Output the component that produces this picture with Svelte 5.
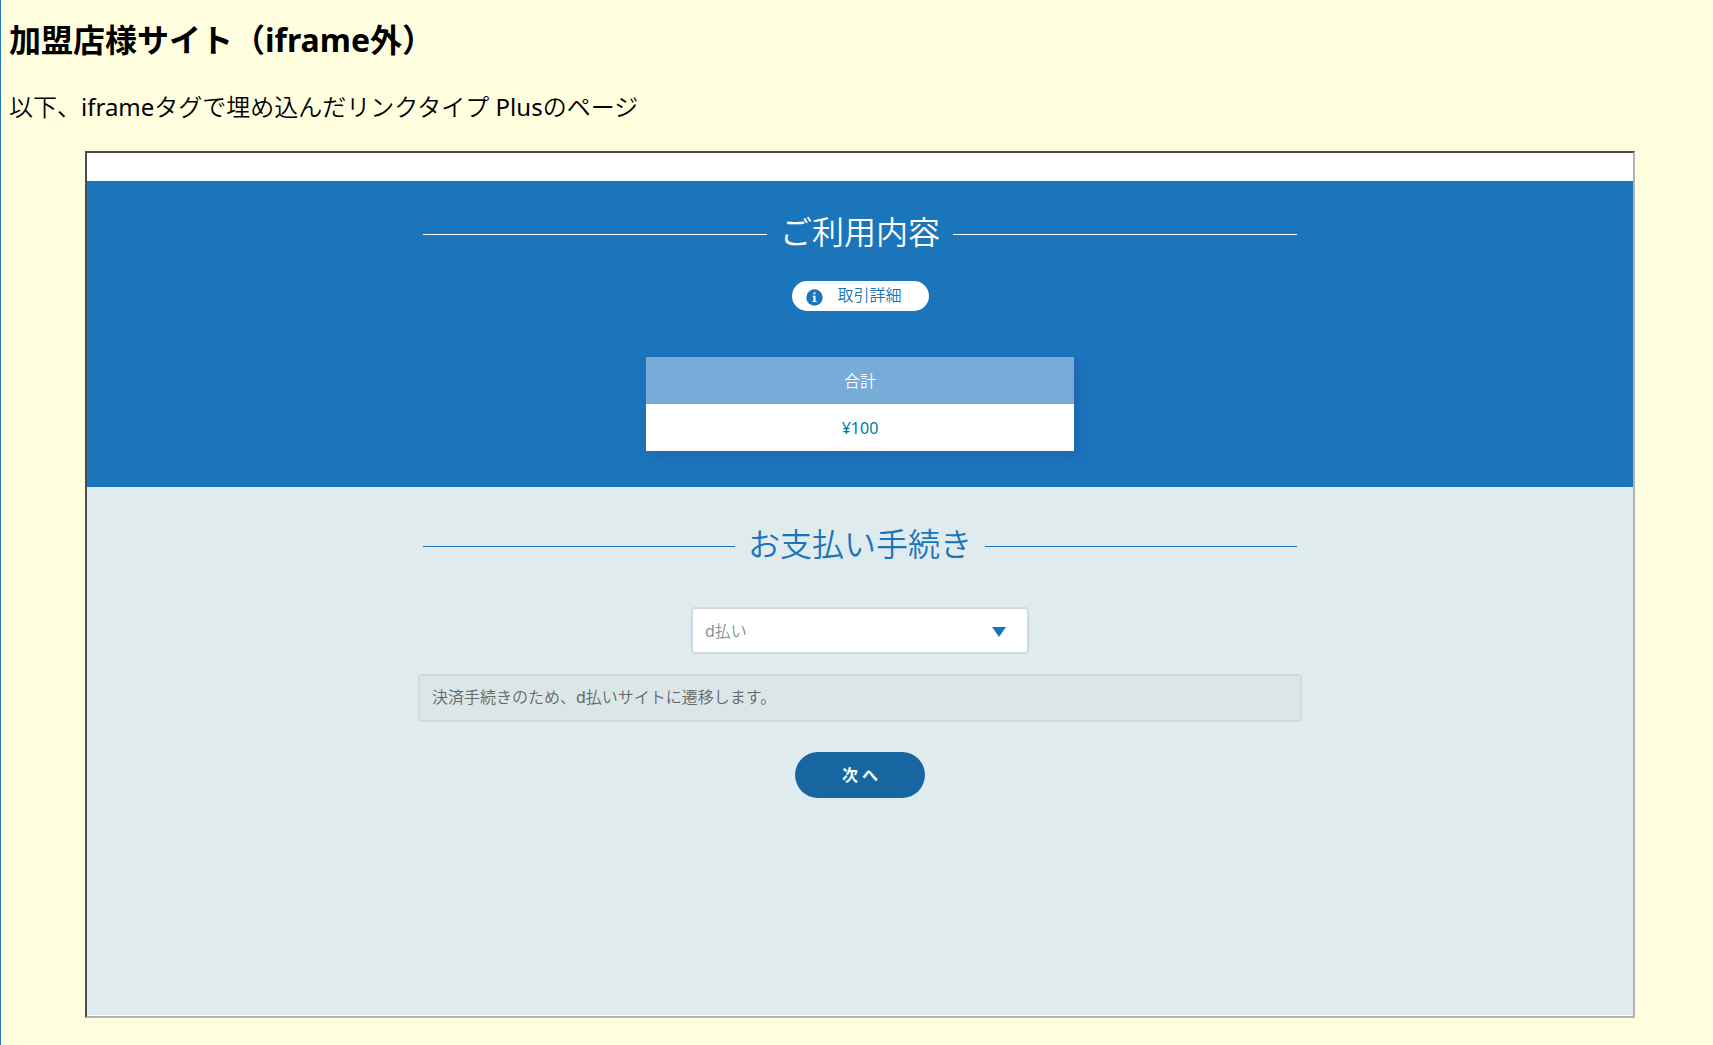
<script lang="ts">
	let methods = ['d払い']
	let selected = 'd払い'
	let amount = 100

	function formatYen(value: number): string {
		return '¥' + value.toLocaleString('ja-JP')
	}
</script>

<main>
	<h1>加盟店様サイト（iframe外）</h1>
	<p class="lead">以下、iframeタグで埋め込んだリンクタイプ Plusのページ</p>

	<div class="frame">
		<section class="usage">
			<h2>ご利用内容</h2>
			<button type="button" class="detail-btn">
				<svg width="17" height="17" viewBox="0 0 17 17" aria-hidden="true">
					<circle cx="8.5" cy="8.5" r="8.2" />
					<path fill="#fff" d="M7.5 3.4h2v1.9h-2zM6.5 6.7h3v5.4h1.1v1H6.4v-1h1.1V7.7h-1z" />
				</svg>
				<span>取引詳細</span>
			</button>
			<table>
				<thead>
					<tr><th>合計</th></tr>
				</thead>
				<tbody>
					<tr><td>{formatYen(amount)}</td></tr>
				</tbody>
			</table>
		</section>

		<section class="payment">
			<h2>お支払い手続き</h2>
			<div class="select-wrap">
				<select aria-label="お支払い方法" bind:value={selected}>
					{#each methods as method}
						<option value={method}>{method}</option>
					{/each}
				</select>
				<svg class="arrow" width="14" height="10" viewBox="0 0 14 10" aria-hidden="true">
					<path d="M0 0h14L7 10z" />
				</svg>
			</div>
			<p class="notice">決済手続きのため、{selected}サイトに遷移します。</p>
			<button type="button" class="next-btn">次へ</button>
		</section>
	</div>
</main>

<style>
:global(body) {
	margin: 0;
	background: #ffffdf;
}

main {
	box-sizing: border-box;
	min-height: 100vh;
	padding: 16px 8px 27px;
	border-left: 1px solid #1b75bb;
	font-family: "Noto Sans", "Noto Sans CJK JP", sans-serif;
	color: #000;
}

h1 {
	margin: 0;
	font-size: 32px;
	line-height: 48px;
}

.lead {
	margin: 24px 0 25px;
	font-family: "Noto Sans", "Noto Sans CJK JP DemiLight", "Noto Sans CJK JP", sans-serif;
	font-size: 24px;
	line-height: 38px;
}

.frame {
	margin: 0 70px 0 76px;
	padding: 28px 0 1px;
	border: 2px solid;
	border-color: #4c4c4c #b2b2b2 #b2b2b2 #4c4c4c;
	background: #fff;
	font-family: "Noto Sans", "Noto Sans CJK JP DemiLight", "Noto Sans CJK JP", sans-serif;
	font-size: 16px;
}

section {
	display: flex;
	flex-direction: column;
	align-items: center;
}

h2 {
	display: flex;
	align-items: center;
	gap: 13px;
	width: 100%;
	max-width: 874px;
	margin: 0;
	font-size: 32px;
	font-weight: 350;
	line-height: 48px;
}
h2::before,
h2::after {
	content: "";
	flex: 1;
	height: 1px;
	margin-top: 4px;
	background: currentColor;
}

.usage {
	padding: 27px 0 36px;
	background: #1b75bb;
	color: #fff;
}

.detail-btn {
	display: flex;
	align-items: center;
	gap: 15px;
	width: 137px;
	height: 30px;
	margin: 25px 0 46px;
	padding: 0 14px;
	border: none;
	border-radius: 15px;
	background: #fff;
	color: #1b75bb;
	font: inherit;
	font-weight: 350;
	line-height: 24px;
	cursor: pointer;
}
.detail-btn span {
	padding-bottom: 3px;
}
.detail-btn svg {
	margin-top: 2px;
}
.detail-btn svg,
.arrow {
	fill: #1b75bb;
}

table {
	width: 428px;
	border-collapse: collapse;
	box-shadow: 5px 5px 10px rgba(39, 78, 170, 0.4);
	text-align: center;
}

th,
td {
	box-sizing: border-box;
	height: 47px;
	padding: 0;
	font-weight: 400;
}
th {
	padding-bottom: 2px;
	background: #78abd7;
	font-weight: 350;
}
td {
	background: #fff;
	color: #00799e;
}

.payment {
	min-height: 528px;
	box-sizing: border-box;
	padding-top: 33px;
	background: #e0ebed;
}
.payment h2 {
	color: #1b75bb;
}

.select-wrap {
	position: relative;
	width: 338px;
	margin: 39px 0 20px;
}

select {
	display: block;
	width: 100%;
	height: 47px;
	padding: 0 12px;
	border: 2px solid #cddce1;
	border-radius: 4px;
	appearance: none;
	background: #fff;
	color: #848f9b;
	font: inherit;
	cursor: pointer;
}

.arrow {
	position: absolute;
	top: 20px;
	right: 23px;
	pointer-events: none;
}

.notice {
	box-sizing: border-box;
	width: 100%;
	max-width: 884px;
	margin: 0 0 30px;
	padding: 9px 12px 11px;
	border: 2px solid #cddce0;
	border-radius: 4px;
	background: #dbe6e8;
	color: #666;
	line-height: 24px;
}

.next-btn {
	width: 130px;
	height: 46px;
	padding: 0 0 2px 4px;
	border: none;
	border-radius: 23px;
	background: #1765a1;
	color: #fff;
	font-family: "Noto Sans", "Noto Sans CJK JP", sans-serif;
	font-size: 16px;
	font-weight: 700;
	letter-spacing: 4px;
	cursor: pointer;
}
</style>
